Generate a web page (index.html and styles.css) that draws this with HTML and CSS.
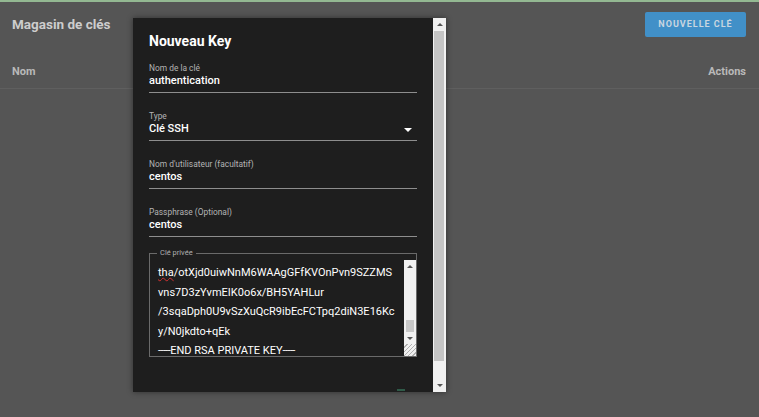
FILE: index.html
```
<!DOCTYPE html>
<html lang="fr">
<head>
    <meta charset="UTF-8">
    <title>Magasin de clés</title>
    <link rel="stylesheet" href="styles.css">
</head>
<body>
<div class="topline"></div>
<div class="toolbar">
    <h1 class="page-title">Magasin de clés</h1>
    <button class="btn-new">NOUVELLE CLÉ</button>
</div>
<div class="thead">
    <span>Nom</span>
    <span>Actions</span>
</div>

<div class="dialog">
    <div class="dialog-body">
        <h2 class="dialog-title">Nouveau Key</h2>

        <div class="field">
            <div class="label">Nom de la clé</div>
            <div class="value">authentication</div>
        </div>
        <div class="field">
            <div class="label">Type</div>
            <div class="value select">Clé SSH<span class="caret"></span></div>
        </div>
        <div class="field">
            <div class="label">Nom d'utilisateur (facultatif)</div>
            <div class="value">centos</div>
        </div>
        <div class="field">
            <div class="label">Passphrase (Optional)</div>
            <div class="value">centos</div>
        </div>

        <div class="keybox">
            <span class="legend">Clé privée</span>
            <div class="keytext">
                <div><span class="typo">tha</span>/otXjd0uiwNnM6WAAgGFfKVOnPvn9SZZMS</div>
                <div>vns7D3zYvmEIK0o6x/BH5YAHLur</div>
                <div>/3sqaDph0U9vSzXuQcR9ibEcFCTpq2diN3E16Kc</div>
                <div>y/N0jkdto+qEk</div>
                <div><span class="dash">-----</span>END RSA PRIVATE KEY<span class="dash">-----</span></div>
            </div>
            <div class="vscroll small">
                <div class="sb-btn"><span class="arr up"></span></div>
                <div class="sb-track"></div>
                <div class="sb-thumb"></div>
                <div class="sb-btn"><span class="arr down"></span></div>
                <div class="grip"></div>
            </div>
        </div>

        <span class="peek"></span>
    </div>
    <div class="vscroll big">
        <div class="sb-btn"><span class="arr up"></span></div>
        <div class="sb-thumb"></div>
        <div class="sb-track"></div>
        <div class="sb-btn"><span class="arr down"></span></div>
    </div>
</div>
</body>
</html>
```

FILE: styles.css
```
* {
    margin: 0;
    padding: 0;
    box-sizing: border-box;
}

body {
    width: 759px;
    height: 417px;
    overflow: hidden;
    position: relative;
    background-color: #555555;
    font-family: Roboto, "Liberation Sans", sans-serif;
    color: #cfcfcf;
}

.topline {
    height: 2px;
    background-color: #93b892;
}

.toolbar {
    height: 44px;
    display: flex;
    align-items: center;
    justify-content: space-between;
    padding: 0 13px 0 12px;
}

.page-title {
    font-size: 13.5px;
    line-height: 20px;
    font-weight: bold;
    color: #cdcdcd;
}

.btn-new {
    height: 25px;
    width: 101px;
    border: none;
    border-radius: 2px;
    background-color: #4190c8;
    color: #c9d6e0;
    font-family: Roboto, "Liberation Sans", sans-serif;
    font-size: 9px;
    font-weight: bold;
    letter-spacing: 1px;
}

.thead {
    display: flex;
    justify-content: space-between;
    padding: 18px 13px 8px 12px;
    border-bottom: 1px solid #5f5f5f;
    font-size: 11px;
    line-height: 16px;
    font-weight: bold;
    color: #b9b9b9;
}

/* dialog */
.dialog {
    position: absolute;
    left: 133px;
    top: 18px;
    width: 313px;
    height: 374px;
    display: flex;
    background-color: #1e1e1e;
    box-shadow: 0 0 6px rgba(0, 0, 0, 0.45);
}

.dialog-body {
    flex: 1;
    min-width: 0;
    position: relative;
    padding: 13px 16px 0;
}

.dialog-title {
    font-size: 14px;
    line-height: 20px;
    font-weight: bold;
    color: #ffffff;
    margin-bottom: 12px;
}

.field {
    margin-top: 18px;
    padding-bottom: 3px;
    border-bottom: 1px solid #8e8e8e;
}

.dialog-title + .field {
    margin-top: 0;
}

.label {
    font-size: 8.4px;
    line-height: 10px;
    color: #b4b4b4;
}

.value {
    font-size: 11px;
    line-height: 16px;
    font-weight: 500;
    color: #ffffff;
}

.select {
    display: flex;
    justify-content: space-between;
    align-items: center;
}

.caret {
    width: 0;
    height: 0;
    margin-right: 5px;
    margin-top: 2px;
    border-left: 4px solid transparent;
    border-right: 4px solid transparent;
    border-top: 4px solid #ffffff;
}

.keybox {
    position: relative;
    margin-top: 16px;
    padding-top: 6px;
    border: 1px solid #6a6a6a;
    display: flex;
}

.legend {
    position: absolute;
    left: 7px;
    top: -6px;
    padding: 0 3px;
    background-color: #1e1e1e;
    font-size: 7.5px;
    line-height: 10px;
    color: #b0b0b0;
}

.keytext {
    flex: 1;
    min-width: 0;
    height: 96px;
    overflow: hidden;
    padding: 3px 0 0 8px;
    font-size: 11px;
    line-height: 19.5px;
    color: #ffffff;
    white-space: nowrap;
}

.typo {
    text-decoration: underline wavy #d03030;
    text-decoration-thickness: 1px;
}

.dash {
    letter-spacing: -0.6px;
}

.peek {
    position: absolute;
    left: 264px;
    bottom: 1px;
    width: 8px;
    height: 2px;
    background-color: #2f5a48;
}

/* scrollbars */
.vscroll {
    flex-shrink: 0;
    display: flex;
    flex-direction: column;
    background-color: #f1f1f1;
}

.vscroll.big {
    width: 13px;
}

.vscroll.small {
    width: 12px;
    height: 96px;
}

.sb-btn {
    height: 12px;
    display: flex;
    align-items: center;
    justify-content: center;
}

.big .sb-btn {
    height: 13px;
}

.big .sb-thumb {
    height: 330px;
    margin: 0 2px 0 1px;
    background-color: #c4c4c4;
}

.big .sb-track {
    flex: 1;
}

.small .sb-track {
    height: 48px;
}

.small .sb-thumb {
    height: 12px;
    margin: 0 2px;
    background-color: #c8c8c8;
}

.arr {
    width: 0;
    height: 0;
    border-left: 3px solid transparent;
    border-right: 3px solid transparent;
}

.arr.up {
    border-bottom: 3px solid #555555;
}

.arr.down {
    border-top: 3px solid #555555;
}

.grip {
    flex: 1;
    background: repeating-linear-gradient(135deg, #f1f1f1 0, #f1f1f1 2px, #b0b0b0 2px, #b0b0b0 3px);
}
```
